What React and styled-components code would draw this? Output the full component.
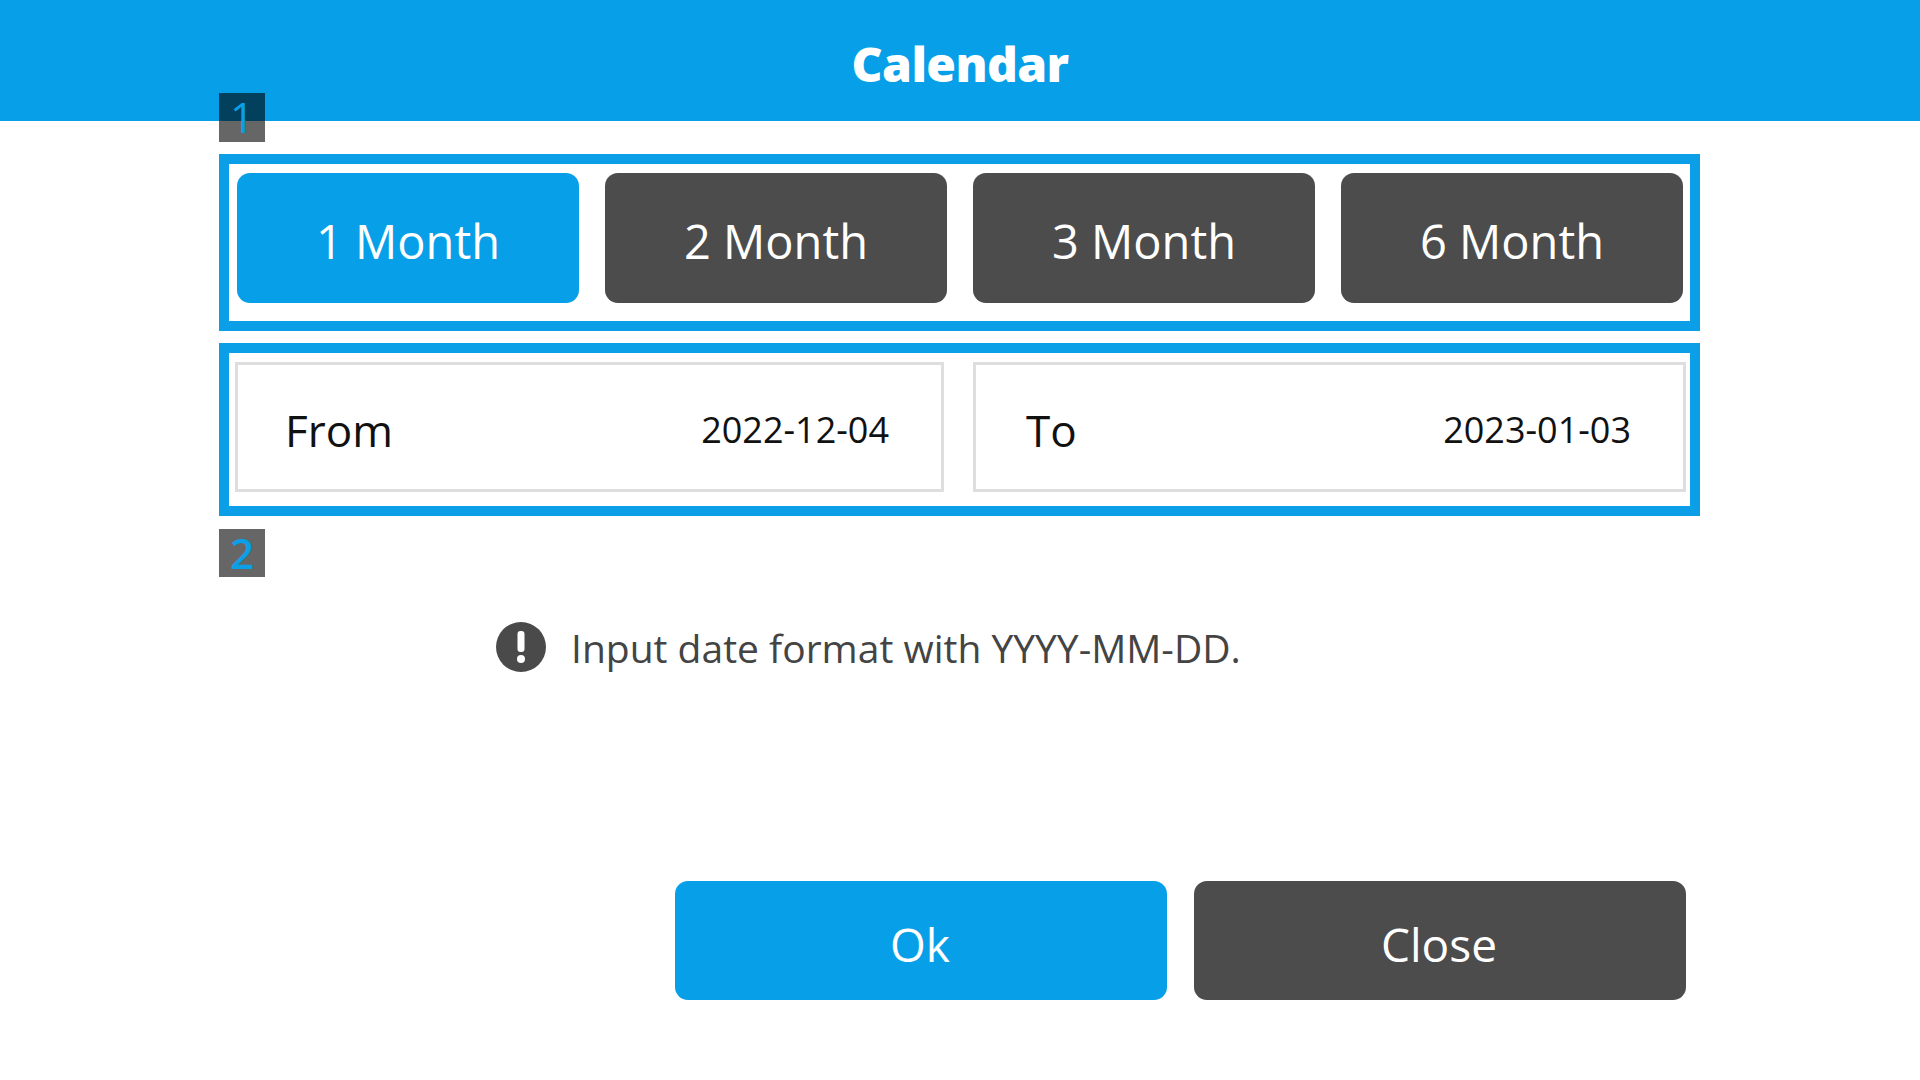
import React from "react";
import styled, { createGlobalStyle } from "styled-components";

const Global = createGlobalStyle`
  html, body { margin: 0; padding: 0; background: #fff; }
  body { font-family: "Open Sans", "Noto Sans", sans-serif; }
`;
const BLUE = "#07a0e8";
const DARK = "#4c4c4c";
const Page = styled.div`
  width: 1920px;
  height: 1080px;
  overflow: hidden;
  background: #fff;
`;
const Header = styled.header`
  height: 121px;
  background: ${BLUE};
  display: flex;
  align-items: center;
  justify-content: center;
`;
const Title = styled.h1`
  margin: 0 0 -6px;
  color: #fff;
  font-size: 48px;
  font-weight: 800;
  letter-spacing: -0.6px;
`;
const Main = styled.main`
  width: 1481px;
  margin: 33px 0 0 219px;
`;
const Frame = styled.section`
  position: relative;
  box-sizing: border-box;
  border: 10px solid #0a9fe6;
  background: #fff;
  margin-bottom: 12px;
`;
const Badge = styled.span`
  position: absolute;
  left: -10px;
  ${(p) => (p.$below ? "top: 176px;" : "top: -71px;")}
  width: 46px;
  height: ${(p) => (p.$below ? 48 : 49)}px;
  background: rgba(0, 0, 0, 0.6);
  color: #0a9fe6;
  font-size: 42px;
  font-weight: ${(p) => (p.$below ? 600 : 400)};
  line-height: 48px;
  text-align: center;
`;
const MonthRow = styled.div`
  display: grid;
  grid-template-columns: repeat(4, 342px);
  gap: 26px;
  padding: 9px 6px 18px 8px;
`;
const MonthButton = styled.button`
  height: 130px;
  border: 0;
  border-radius: 13px;
  padding: 6px 0 0;
  background: ${(p) => (p.$active ? BLUE : DARK)};
  color: #fff;
  font-family: inherit;
  font-size: 47px;
`;
const DateRow = styled.div`
  display: grid;
  grid-template-columns: 709px 713px;
  justify-content: space-between;
  padding: 9px 4px 14px 6px;
`;
const DateField = styled.div`
  box-sizing: border-box;
  height: 130px;
  border: 3px solid #dedede;
  padding: 0 52px 0 ${(p) => (p.$wide ? 50 : 47)}px;
  display: flex;
  align-items: center;
  justify-content: space-between;
`;
const FieldLabel = styled.span`
  font-size: 44px;
  color: #111;
  margin-top: 6px;
`;
const FieldValue = styled.span`
  font-size: 36px;
  color: #111;
  margin-top: 4px;
`;
const Hint = styled.p`
  display: flex;
  align-items: center;
  gap: 25px;
  margin: 106px 0 0 277px;
  color: #444;
  font-size: 39px;
  height: 50px;
`;
const HintIcon = styled.svg`
  width: 50px;
  height: 50px;
  flex: none;
`;
const Actions = styled.div`
  display: grid;
  grid-template-columns: 492px 492px;
  justify-content: end;
  gap: 27px;
  margin: 209px 14px 0 0;
`;
const ActionButton = styled.button`
  height: 119px;
  border: 0;
  border-radius: 13px;
  padding: 6px 2px 0 0;
  background: ${(p) => (p.$primary ? BLUE : DARK)};
  color: #fff;
  font-family: inherit;
  font-size: 46px;
`;

export default function App() {
  return (
    <Page>
      <Global />
      <Header>
        <Title>Calendar</Title>
      </Header>
      <Main>
        <Frame>
          <Badge>1</Badge>
          <MonthRow>
            <MonthButton $active>1 Month</MonthButton>
            <MonthButton>2 Month</MonthButton>
            <MonthButton>3 Month</MonthButton>
            <MonthButton>6 Month</MonthButton>
          </MonthRow>
        </Frame>
        <Frame>
          <Badge $below>2</Badge>
          <DateRow>
            <DateField>
              <FieldLabel>From</FieldLabel>
              <FieldValue>2022-12-04</FieldValue>
            </DateField>
            <DateField $wide>
              <FieldLabel>To</FieldLabel>
              <FieldValue>2023-01-03</FieldValue>
            </DateField>
          </DateRow>
        </Frame>
        <Hint>
          <HintIcon viewBox="0 0 50 50" aria-hidden="true">
            <circle cx="25" cy="25" r="25" fill="#4a4a4a" />
            <rect x="21.5" y="9" width="7" height="21" rx="3" fill="#fff" />
            <circle cx="25" cy="37" r="4" fill="#fff" />
          </HintIcon>
          Input date format with YYYY-MM-DD.
        </Hint>
        <Actions>
          <ActionButton $primary>Ok</ActionButton>
          <ActionButton>Close</ActionButton>
        </Actions>
      </Main>
    </Page>
  );
}
